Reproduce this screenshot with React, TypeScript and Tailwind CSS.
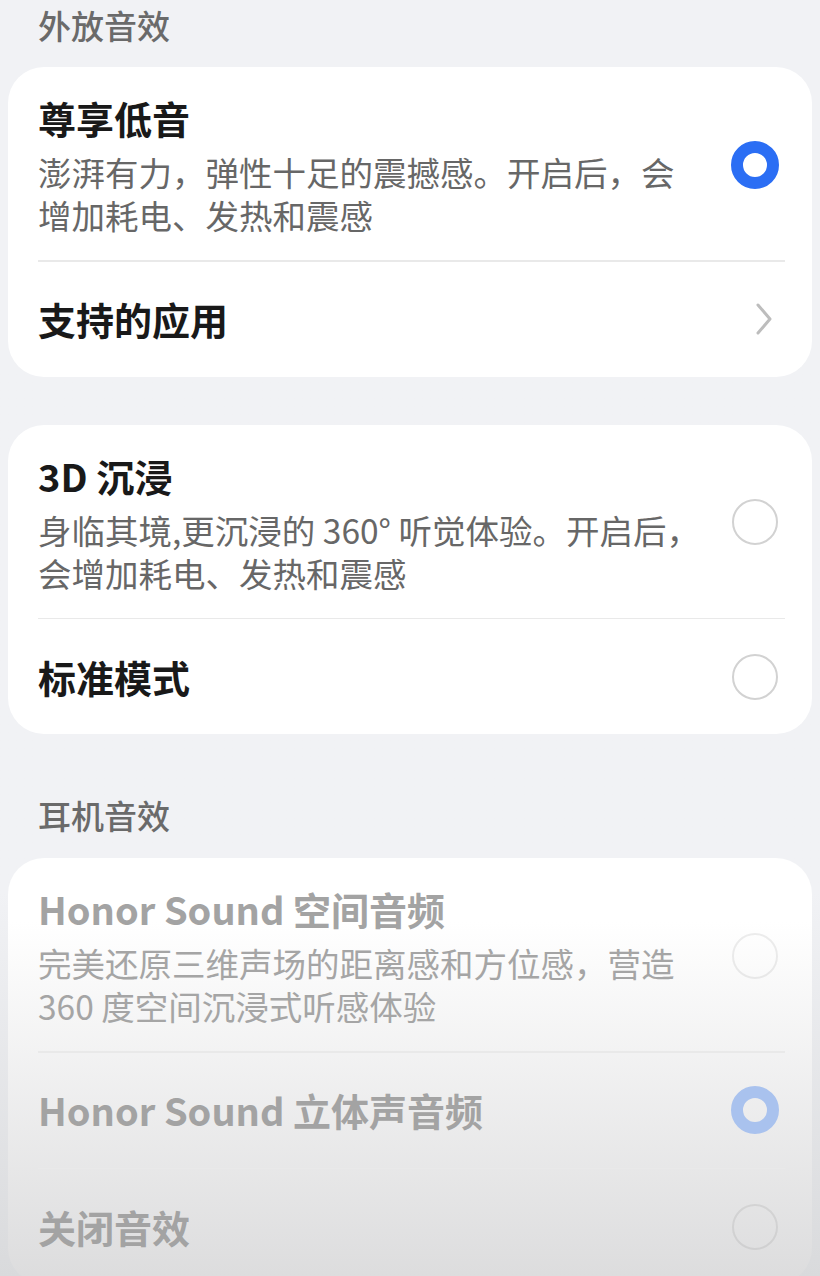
type Opt = {
  title: string;
  desc?: string[];
  selected?: boolean;
  chevron?: boolean;
};

const Radio = ({ selected, disabled }: { selected?: boolean; disabled?: boolean }) => {
  if (selected) {
    return (
      <div
        className={`w-[48px] h-[48px] rounded-full border-[12px] ${
          disabled ? "border-[#a9c2ee]" : "border-[#2b6ef4]"
        }`}
      />
    );
  }
  return (
    <div
      className={`w-[46px] h-[46px] rounded-full border-[2.5px] ${
        disabled ? "border-black/[0.07]" : "border-[#d2d2d2]"
      }`}
    />
  );
};

const Chevron = () => (
  <svg width="20" height="34" viewBox="0 0 20 34" className="ml-[18px]">
    <polyline
      points="4,3 16,17 4,31"
      fill="none"
      stroke="#bdbdbd"
      strokeWidth="3"
      strokeLinecap="round"
      strokeLinejoin="round"
    />
  </svg>
);

const Row = ({ opt, disabled, last }: { opt: Opt; disabled?: boolean; last?: boolean }) => {
  const hasDesc = !!opt.desc;
  return (
    <div>
      <div
        className={`flex items-center justify-between ${
          hasDesc ? "pt-[26px] pb-[24px]" : "h-[115px]"
        }`}
      >
        <div>
          <div
            className={`text-[38px] leading-[50px] font-bold ${
              disabled ? "text-[#a3a3a3]" : "text-[#191919]"
            }`}
          >
            {opt.title}
          </div>
          {hasDesc && (
            <div
              className={`mt-[7px] text-[33.5px] leading-[43px] whitespace-nowrap ${
                disabled ? "text-[#a5a5a5]" : "text-[#676767]"
              }`}
            >
              {opt.desc!.map((l, i) => (
                <div key={i}>{l}</div>
              ))}
            </div>
          )}
        </div>
        <div className="mr-[6px] flex w-[48px] justify-center">
          {opt.chevron ? <Chevron /> : <Radio selected={opt.selected} disabled={disabled} />}
        </div>
      </div>
      {!last && <div className="h-[1.5px] bg-[#e9e9e9]" />}
    </div>
  );
};

const Card = ({ items, disabled }: { items: Opt[]; disabled?: boolean }) => (
  <div
    className={`rounded-[36px] pl-[30px] pr-[27px] ${
      disabled ? "bg-gradient-to-b from-white from-15% to-[#dcdcdd]" : "bg-white"
    }`}
  >
    {items.map((o, i) => (
      <Row key={i} opt={o} disabled={disabled} last={i === items.length - 1} />
    ))}
  </div>
);

const Header = ({ text }: { text: string }) => (
  <div className="h-[52px] flex items-center pl-[30px] text-[33px] font-medium text-[#6a6a6a]">
    {text}
  </div>
);

export default function App() {
  return (
    <div
      className="h-[1276px] overflow-hidden bg-gradient-to-b from-[#f1f2f5] from-70% to-[#d9dadc] px-2"
      style={{ fontFamily: '"Noto Sans CJK SC", "Noto Sans", sans-serif' }}
    >
      <Header text="外放音效" />
      <div className="mt-[15px]">
        <Card
          items={[
            {
              title: "尊享低音",
              desc: ["澎湃有力，弹性十足的震撼感。开启后，会", "增加耗电、发热和震感"],
              selected: true,
            },
            { title: "支持的应用", chevron: true },
          ]}
        />
      </div>
      <div className="mt-[48px]">
        <Card
          items={[
            {
              title: "3D 沉浸",
              desc: ["身临其境,更沉浸的 360° 听觉体验。开启后，", "会增加耗电、发热和震感"],
            },
            { title: "标准模式" },
          ]}
        />
      </div>
      <div className="mt-[56px]">
        <Header text="耳机音效" />
      </div>
      <div className="mt-[16px]">
        <Card
          disabled
          items={[
            {
              title: "Honor Sound 空间音频",
              desc: ["完美还原三维声场的距离感和方位感，营造", "360 度空间沉浸式听感体验"],
            },
            { title: "Honor Sound 立体声音频", selected: true },
            { title: "关闭音效" },
          ]}
        />
      </div>
    </div>
  );
}
